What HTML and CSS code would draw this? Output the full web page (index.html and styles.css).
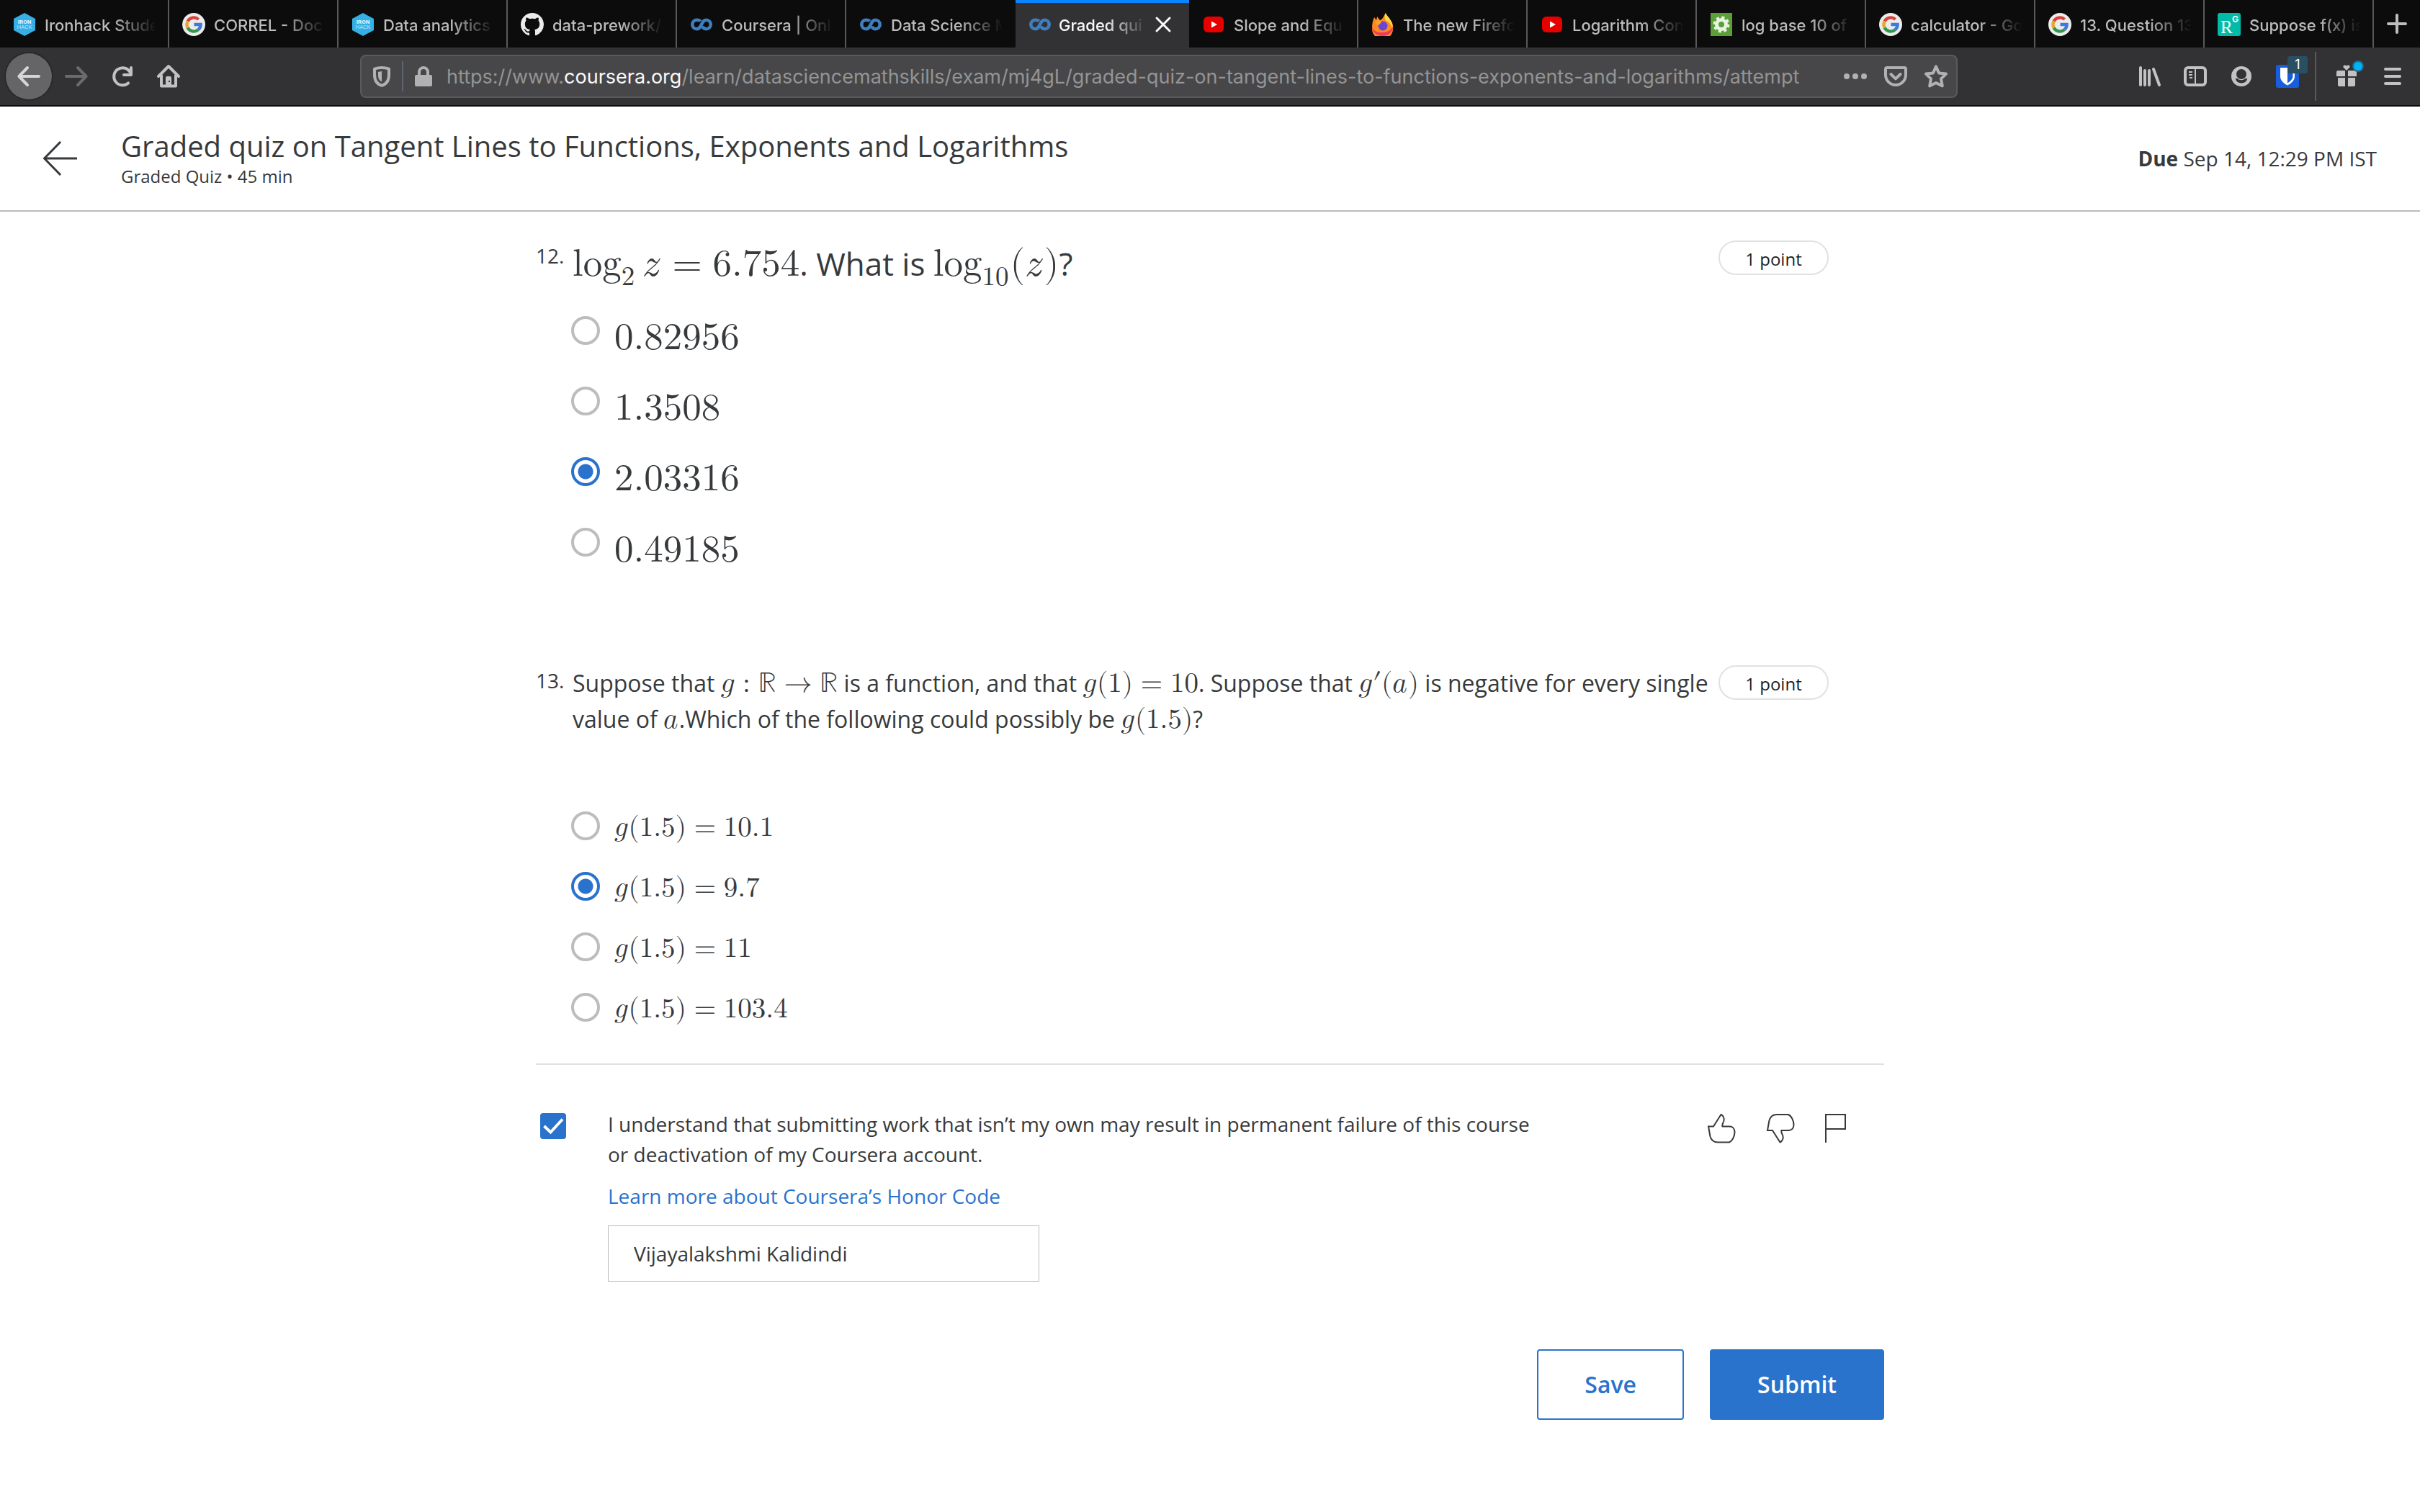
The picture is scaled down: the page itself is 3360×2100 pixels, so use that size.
FILE: index.html
```html
<!DOCTYPE html>
<html lang="en">
<head>
<meta charset="utf-8">
<title>Graded quiz on Tangent Lines to Functions, Exponents and Logarithms</title>
<link rel="stylesheet" href="styles.css">
</head>
<body>
<svg class="defs" aria-hidden="true">
  <symbol id="ironhack" viewBox="0 0 32 32"><path fill="#35b0e6" d="M16 0l15 8v16l-15 8-15-8V8z"/><text class="hack-top" x="16" y="15" text-anchor="middle">IRON</text><text class="hack-bottom" x="16" y="22" text-anchor="middle">HACK</text></symbol>
  <symbol id="google" viewBox="0 0 32 32"><circle cx="16" cy="16" r="16" fill="#ececec"/><g fill="none" stroke-width="4.4"><path stroke="#d9443a" d="M7.6 11.5A9.6 9.6 0 0 1 22.6 9"/><path stroke="#e2ab2c" d="M7.6 20.500A9.600 9.600 0 0 1 7.600 11.500"/><path stroke="#34964e" d="M22.400 23.200A9.600 9.600 0 0 1 7.600 20.500"/><path stroke="#3f79db" d="M16.500 16H25.600A9.600 9.600 0 0 1 22.400 23.200"/></g></symbol>
  <symbol id="github" viewBox="0 0 16 16"><path fill="#ececec" d="M8 0C3.580 0 0 3.580 0 8c0 3.540 2.290 6.530 5.470 7.590.4.070.55-.17.55-.38 0-.19-.01-.82-.01-1.490-2.010.37-2.530-.49-2.690-.94-.09-.23-.48-.94-.82-1.130-.28-.15-.68-.52-.01-.53.63-.01 1.080.58 1.230.82.72 1.210 1.870.87 2.330.66.070-.52.28-.87.51-1.070-1.780-.2-3.640-.89-3.640-3.950 0-.87.31-1.590.82-2.150-.08-.2-.36-1.020.08-2.120 0 0 .67-.21 2.200.82.64-.18 1.320-.27 2-.27s1.360.09 2 .27c1.530-1.040 2.200-.82 2.200-.82.44 1.100.16 1.920.08 2.120.51.56.82 1.270.82 2.150 0 3.070-1.870 3.750-3.650 3.950.29.25.54.73.54 1.480 0 1.070-.01 1.930-.01 2.200 0 .21.15.46.55.38A8.010 8.010 0 0 0 16 8c0-4.420-3.580-8-8-8z"/></symbol>
  <symbol id="coursera" viewBox="0 0 32 32"><path fill="none" stroke="#3f7ebe" stroke-width="4.600" d="M14.500 11.500C13 9.500 11 9.800 9.500 9.800A6.200 6.200 0 0 0 9.500 22.200C17 22.200 15 9.800 22.500 9.800A6.200 6.200 0 0 1 22.500 22.200C20 22.200 18 20.500 17.500 18.500"/></symbol>
  <symbol id="youtube" viewBox="0 0 32 32"><rect x="2" y="5" width="28" height="22" rx="6" fill="#e60000"/><path fill="#fff" d="M13 11.500l8 4.500-8 4.500z"/></symbol>
  <symbol id="firefox" viewBox="0 0 32 32"><path fill="#ff8a1f" d="M4 6l3 4 1-5 4 5c4-1 5-6 8-10 1 4 4 5 6 9 3 4 5 8 4 13a14.500 14.500 0 0 1-29 0C1 15 2 10 4 6z"/><path fill="#f03a5c" d="M1 19c2 6 8 9 14 8 7 0 12-3 15-8 0 8-7 13-14.500 13S1 27 1 19z"/><path fill="#ffd84a" d="M20 0c1 4 4 5 6 9 3 4 4 8 3 12-1-4-4-8-8-10-3-2-3-6-1-11z"/><circle cx="16" cy="18" r="6.500" fill="#6a45d8"/><path fill="#ffa22a" d="M6 11c4-1 6 0 8 2l-4 4c-3 0-4-3-4-6z"/></symbol>
  <symbol id="symbolab" viewBox="0 0 32 32"><rect x="1" width="30" height="32" fill="#5c9f38"/><circle cx="16" cy="16" r="9.500" fill="none" stroke="#e9f3e2" stroke-width="4" stroke-dasharray="4 3.460"/><circle cx="16" cy="16" r="6.500" fill="none" stroke="#e9f3e2" stroke-width="5"/></symbol>
  <symbol id="researchgate" viewBox="0 0 32 32"><rect width="32" height="32" rx="3" fill="#00bba8"/><text class="rg-r" x="4" y="28">R</text><text class="rg-g" x="20" y="13">G</text></symbol>
</svg>

<header class="browser">
  <nav class="tabs" aria-label="Open tabs">
    <a class="tab" href="#"><svg><use href="#ironhack"/></svg><span>Ironhack Stude</span></a>
    <a class="tab" href="#"><svg><use href="#google"/></svg><span>CORREL - Doc</span></a>
    <a class="tab" href="#"><svg><use href="#ironhack"/></svg><span>Data analytics</span></a>
    <a class="tab" href="#"><svg><use href="#github"/></svg><span>data-prework/</span></a>
    <a class="tab" href="#"><svg><use href="#coursera"/></svg><span>Coursera | Onl</span></a>
    <a class="tab" href="#"><svg><use href="#coursera"/></svg><span>Data Science M</span></a>
    <div class="tab active"><svg><use href="#coursera"/></svg><span>Graded qui</span><button class="close" aria-label="Close tab"><svg viewBox="0 0 24 24"><path d="M3 3l18 18M21 3L3 21"/></svg></button></div>
    <a class="tab" href="#"><svg><use href="#youtube"/></svg><span>Slope and Equ</span></a>
    <a class="tab" href="#"><svg><use href="#firefox"/></svg><span>The new Firefo</span></a>
    <a class="tab" href="#"><svg><use href="#youtube"/></svg><span>Logarithm Con</span></a>
    <a class="tab" href="#"><svg><use href="#symbolab"/></svg><span>log base 10 of</span></a>
    <a class="tab" href="#"><svg><use href="#google"/></svg><span>calculator - Go</span></a>
    <a class="tab" href="#"><svg><use href="#google"/></svg><span>13. Question 13</span></a>
    <a class="tab" href="#"><svg><use href="#researchgate"/></svg><span>Suppose f(x) is</span></a>
    <button class="new-tab" aria-label="New tab"><svg viewBox="0 0 32 32"><path d="M16 4v24M4 16h24"/></svg></button>
  </nav>
  <div class="toolbar">
    <div class="tools">
      <button class="tool back" aria-label="Back"><svg viewBox="0 0 16 16"><path class="line" d="M15 8H1.500M7 2L1.200 8 7 14"/></svg></button>
      <button class="tool dim" aria-label="Forward"><svg viewBox="0 0 16 16"><path class="line" d="M1 8h13.500M9 2l5.800 6L9 14"/></svg></button>
      <button class="tool" aria-label="Reload"><svg viewBox="0 0 16 16"><path class="line" d="M12 12.700A6 6 0 1 1 13.200 5"/><path fill="currentColor" d="M14 1a1 1 0 0 1 1 1v5a1 1 0 0 1-1 1H9a1 1 0 0 1 0-2h4V2a1 1 0 0 1 1-1z"/></svg></button>
      <button class="tool" aria-label="Home"><svg viewBox="0 0 16 16"><path class="line" d="M1 8l7-7 7 7M3 7.500v7.300h10V7.500"/><path fill="currentColor" fill-rule="evenodd" d="M7 8h2a1 1 0 0 1 1 1v6H6V9a1 1 0 0 1 1-1zm1 3v1h1v-1z"/></svg></button>
    </div>
    <div class="urlbar">
      <button class="field-icon" aria-label="Tracking protection"><svg viewBox="0 0 16 16"><path class="line" d="M8 2c2 0 3.500.3 5 .8V7c0 4-2 6.500-5 7.400C5 13.500 3 11 3 7V2.800C4.500 2.300 6 2 8 2z"/><path fill="currentColor" d="M8 4.500v7.300C6.200 10.800 5.500 9.300 5.500 7V5z"/></svg></button>
      <span class="split"></span>
      <button class="field-icon" aria-label="Site information"><svg viewBox="0 0 16 16"><path class="line" d="M5 8V5a3 3 0 0 1 6 0v3"/><rect x="2" y="7" width="12" height="8" rx="1" fill="currentColor"/></svg></button>
      <div class="url" role="textbox" aria-label="Address">https://www.<b>coursera.org</b>/learn/datasciencemathskills/exam/mj4gL/graded-quiz-on-tangent-lines-to-functions-exponents-and-logarithms/attempt</div>
      <button class="field-icon" aria-label="Page actions"><svg viewBox="0 0 16 16" fill="currentColor"><circle cx="2" cy="8" r="2"/><circle cx="8" cy="8" r="2"/><circle cx="14" cy="8" r="2"/></svg></button>
      <button class="field-icon" aria-label="Save to Pocket"><svg viewBox="0 0 16 16"><path class="line" d="M2 2h12a1 1 0 0 1 1 1v4A7 7 0 0 1 1 7V3a1 1 0 0 1 1-1zM4.700 6.500L8 9.700l3.300-3.200"/></svg></button>
      <button class="field-icon" aria-label="Bookmark"><svg viewBox="0 0 16 16"><path class="line" d="M8 1.200l2 4.500 5 .6-3.500 3.400.9 5L8 12.500l-4.400 2.200.9-5L1 6.300l5-.6z"/></svg></button>
    </div>
    <div class="tools">
      <button class="tool" aria-label="Library"><svg viewBox="0 0 16 16"><path class="line" d="M2 2v12M5 4v10M8 4v10M11 3l4 11"/></svg></button>
      <button class="tool" aria-label="Sidebar"><svg viewBox="0 0 16 16"><rect class="line" x="1" y="2" width="14" height="12" rx="2"/><path d="M8 2v12M3.500 5h2.500M3.500 7h2.500M4 9h2" stroke="currentColor" fill="none"/></svg></button>
      <button class="tool" aria-label="Account"><svg viewBox="0 0 16 16"><path fill="currentColor" fill-rule="evenodd" d="M8 1a7 7 0 1 0 0 14A7 7 0 0 0 8 1zm0 2a3.500 3.500 0 1 1 0 7 3.500 3.500 0 0 1 0-7zM3.800 9.500h1.400a4 4 0 0 0 5.600 0h1.400A4.500 4.500 0 0 1 8 12.800 4.500 4.500 0 0 1 3.800 9.500z"/></svg></button>
      <button class="tool" aria-label="Bitwarden"><svg viewBox="0 0 16 16"><rect width="16" height="16" rx="1.500" fill="#175ddc"/><path fill="#fff" fill-rule="evenodd" d="M3 2h10v6c0 3-2.500 5-5 6.300C5.500 13 3 11 3 8zm5 1.500v9.200c2-1.200 3.700-2.700 3.700-4.700V3.500z"/></svg><span class="badge">1</span></button>
      <span class="divider"></span>
      <button class="tool" aria-label="What's new"><svg viewBox="0 0 16 16" fill="currentColor"><path d="M1 5a1 1 0 0 1 1-1h5v4H1zM9 4h5a1 1 0 0 1 1 1v3H9zM2 9h5v6H3a1 1 0 0 1-1-1zM9 9h5v5a1 1 0 0 1-1 1H9zM8 4L5.700 1.600C5.500.5 6.800-.4 8 .8c1.200-1.200 2.500-.3 2.300.8z"/></svg><span class="dot"></span></button>
      <button class="tool" aria-label="Menu"><svg viewBox="0 0 16 16"><path class="line" d="M3 3h10M3 8h10M3 13h10"/></svg></button>
    </div>
  </div>
</header>

<header class="quiz-header">
  <a class="leave" href="#" aria-label="Back to course"><svg viewBox="0 0 48 48"><path d="M47 24H1.500M24 1L1.500 24 24 47"/></svg></a>
  <div class="heading">
    <h1>Graded quiz on Tangent Lines to Functions, Exponents and Logarithms</h1>
    <p>Graded Quiz • 45 min</p>
  </div>
  <p class="due"><b>Due</b> Sep 14, 12:29 PM IST</p>
</header>

<main>
  <section class="question large">
    <div class="question-head">
      <span class="number">12.</span>
      <p class="prompt"><span class="fn">log<sub>2</sub></span><math><mrow><mspace width="0.167em"/><mi>z</mi><mo>=</mo><mn>6.754</mn></mrow></math>. What is <span class="fn">log<sub>10</sub></span><math><mrow><mo stretchy="false">(</mo><mi>z</mi><mo stretchy="false">)</mo></mrow></math>?</p>
      <span class="points">1 point</span>
    </div>
    <div class="options">
      <label><input type="radio" name="q12"><math><mn>0.82956</mn></math></label>
      <label><input type="radio" name="q12"><math><mn>1.3508</mn></math></label>
      <label><input type="radio" name="q12" checked><math><mn>2.03316</mn></math></label>
      <label><input type="radio" name="q12"><math><mn>0.49185</mn></math></label>
    </div>
  </section>

  <section class="question">
    <div class="question-head">
      <span class="number">13.</span>
      <p class="prompt">Suppose that <math><mrow><mi>g</mi><mo lspace="0.278em" rspace="0.278em">:</mo><mi class="set">ℝ</mi><mo stretchy="false">→</mo><mi class="set">ℝ</mi></mrow></math> is a function, and that <math><mrow><mi>g</mi><mo stretchy="false">(</mo><mn>1</mn><mo stretchy="false">)</mo><mo>=</mo><mn>10</mn></mrow></math>. Suppose that <math><mrow><mi>g</mi><mo lspace="0" rspace="0">′</mo><mo stretchy="false">(</mo><mi>a</mi><mo stretchy="false">)</mo></mrow></math> is negative for every single value of <math><mi>a</mi></math>.Which of the following could possibly be <math><mrow><mi>g</mi><mo stretchy="false">(</mo><mn>1.5</mn><mo stretchy="false">)</mo></mrow></math>?</p>
      <span class="points">1 point</span>
    </div>
    <div class="options">
      <label><input type="radio" name="q13"><math><mrow><mi>g</mi><mo stretchy="false">(</mo><mn>1.5</mn><mo stretchy="false">)</mo><mo>=</mo><mn>10.1</mn></mrow></math></label>
      <label><input type="radio" name="q13" checked><math><mrow><mi>g</mi><mo stretchy="false">(</mo><mn>1.5</mn><mo stretchy="false">)</mo><mo>=</mo><mn>9.7</mn></mrow></math></label>
      <label><input type="radio" name="q13"><math><mrow><mi>g</mi><mo stretchy="false">(</mo><mn>1.5</mn><mo stretchy="false">)</mo><mo>=</mo><mn>11</mn></mrow></math></label>
      <label><input type="radio" name="q13"><math><mrow><mi>g</mi><mo stretchy="false">(</mo><mn>1.5</mn><mo stretchy="false">)</mo><mo>=</mo><mn>103.4</mn></mrow></math></label>
    </div>
  </section>

  <section class="honor">
    <input type="checkbox" id="agree" checked>
    <div class="honor-body">
      <label for="agree">I understand that submitting work that isn’t my own may result in permanent failure of this course or deactivation of my Coursera account.</label>
      <a href="#">Learn more about Coursera’s Honor Code</a>
      <input type="text" aria-label="Your legal name" value="Vijayalakshmi Kalidindi">
    </div>
    <div class="feedback">
      <button aria-label="Like"><svg viewBox="0 0 48 48"><path d="M6 21.500h7L23.500 5c3.500 1.500 5 6 3.700 9.500-1 2.500-2.700 5-1.700 7h10c4 0 7 3 7 8 0 5-3 12-7.500 14H19c-6 0-9-3-10.500-8z"/></svg></button>
      <button aria-label="Dislike"><svg viewBox="0 0 48 48"><path transform="matrix(1 0 0 -1 2 48.500)" d="M6 21.500h7L23.500 5c3.500 1.500 5 6 3.700 9.500-1 2.500-2.700 5-1.700 7h10c4 0 7 3 7 8 0 5-3 12-7.500 14H19c-6 0-9-3-10.500-8z"/></svg></button>
      <button aria-label="Report"><svg viewBox="0 0 48 48"><path d="M9 44V5h27v20H9"/></svg></button>
    </div>
  </section>

  <div class="actions">
    <button class="save">Save</button>
    <button class="submit">Submit</button>
  </div>
</main>
</body>
</html>
```
FILE: styles.css
```css
* { box-sizing: border-box; }

body {
  margin: 0;
  background: #fff;
  color: #373a3c;
  font: 28px/42px "Open Sans", "Noto Sans", sans-serif;
}

h1, p { margin: 0; font-weight: 400; }
a { color: #2a73cc; text-decoration: none; }
button { padding: 0; border: 0; background: none; color: inherit; font: inherit; }
svg { display: block; }
.defs { display: none; }

/* Browser window */
.browser {
  background: #323234;
  border-bottom: 2px solid #0c0c0d;
  color: #c2c2c3;
  font-family: Inter, Roboto, sans-serif;
}

.tabs { display: flex; height: 66px; background: #0c0c0c; }

.tab {
  display: flex;
  flex: 1;
  align-items: center;
  gap: 12px;
  min-width: 0;
  padding: 4px 16px 2px 18px;
  border-right: 2px solid #59595b;
  color: #bdbdbd;
  font-size: 22px;
  font-weight: 500;
  line-height: 32px;
}
.tab > svg { flex: none; width: 32px; height: 32px; }
.tab > span {
  flex: 1;
  padding-top: 2px;
  overflow: hidden;
  white-space: nowrap;
  -webkit-mask-image: linear-gradient(to left, transparent, #000 60px);
  mask-image: linear-gradient(to left, transparent, #000 60px);
}
.tab:has(+ .active) { border-right-color: #0c0c0c; }
.tab.active {
  gap: 10px;
  padding: 0 24px 2px 18px;
  border-top: 4px solid #0a84ff;
  border-right: 0;
  background: #323234;
  color: #f9f9fa;
}
.close svg { width: 24px; height: 24px; fill: none; stroke: #f9f9fa; stroke-width: 3; stroke-linecap: round; }

.new-tab { display: grid; place-items: center; width: 64px; }
.new-tab svg { width: 32px; height: 32px; stroke: #bdbdbd; stroke-width: 4; stroke-linecap: round; }

.hack-top, .hack-bottom { fill: #e8f6fc; font: 700 8px Roboto, sans-serif; }
.hack-bottom { font-weight: 300; }
.rg-r, .rg-g { fill: #fff; font: 25px "Liberation Serif", serif; }
.rg-g { font: 700 12px Inter, sans-serif; }

.toolbar { display: flex; align-items: center; gap: 234px; height: 80px; padding: 0 6px 0 8px; }
.tools { display: flex; align-items: center; }
.tool { position: relative; display: grid; place-items: center; width: 64px; height: 64px; }
.tool svg, .field-icon svg { width: 32px; height: 32px; overflow: visible; }
.line { fill: none; stroke: currentColor; stroke-width: 2; stroke-linecap: round; stroke-linejoin: round; }
.back { margin-right: 2px; border-radius: 50%; background: #656567; box-shadow: 0 0 0 2px #29292b; color: #d6d6d6; }
.dim { color: #6b6b6d; }
.divider { width: 2px; height: 68px; margin: 0 10px 0 6px; background: #59595b; }

.badge {
  position: absolute;
  top: 4px;
  right: 4px;
  width: 28px;
  height: 24px;
  border-radius: 3px;
  background: #2a4f63;
  color: #fff;
  font-size: 18px;
  line-height: 24px;
}
.dot {
  position: absolute;
  top: 12px;
  right: 10px;
  width: 12px;
  height: 12px;
  border-radius: 50%;
  background: #00b3f4;
  box-shadow: 0 0 0 2px #1c6a8a;
}

.urlbar {
  display: flex;
  flex: 1;
  align-items: center;
  min-width: 0;
  height: 60px;
  border: 2px solid #5a5a5c;
  border-radius: 8px;
  background: #474749;
  color: #b1b1b3;
}
.field-icon { display: grid; flex: none; place-items: center; width: 56px; height: 56px; }
.split { width: 2px; height: 42px; background: #5f6470; }
.url {
  flex: 1;
  min-width: 0;
  padding: 2px 0 0 4px;
  overflow: hidden;
  color: #949494;
  font-size: 27px;
  line-height: 40px;
  white-space: nowrap;
}
.url b { color: #f9f9fa; font-weight: 400; }

/* Quiz header */
.quiz-header {
  display: flex;
  align-items: center;
  gap: 60px;
  padding: 31px 60px;
  border-bottom: 2px solid #bbb;
}
.leave svg { width: 48px; height: 48px; fill: none; stroke: #373a3c; stroke-width: 3; }
.heading { flex: 1; }
.heading h1 { font-size: 40px; line-height: 48px; }
.heading p { margin-top: 2px; font-size: 24px; line-height: 32px; }

/* Questions */
main { max-width: 1872px; margin: 0 auto; padding-bottom: 100px; }

.question { padding-bottom: 24px; font-size: 32px; line-height: 50px; }
.question.large { padding: 40px 0 98px; font-size: 44px; line-height: 64px; }
.question-head { display: flex; align-items: flex-start; padding-right: 77px; }
.number { flex: none; width: 51px; font-size: 28px; line-height: 42px; }
.prompt { flex: 1; }

.points {
  flex: none;
  width: 153px;
  padding-top: 4px;
  border: 2px solid #e1e1e1;
  border-radius: 24px;
  color: #1f1f1f;
  font-size: 24px;
  line-height: 40px;
  text-align: center;
}

/* Formulas */
math, .fn {
  font-family: "Latin Modern Math", math, "Liberation Serif", serif;
  font-size: 39px;
  line-height: 1;
}
.large math, .large .fn { font-size: 53px; }
mi { padding-right: 1px; }
.large mi { padding-right: 2px; }
mi.set { padding-right: 0; }
.fn sub { position: relative; top: 13px; margin-right: 2px; font-size: 37px; line-height: 0; vertical-align: baseline; }

.options { display: grid; padding: 93px 0 0 49px; }
.options label { display: flex; align-items: flex-start; gap: 20px; height: 84px; padding-top: 10px; }
.options math { margin-top: 4px; }
.large .options { padding-top: 36px; }
.large .options label { height: 98px; padding-top: 5px; }
.large .options math { margin-top: 10px; }

input[type="radio"] {
  flex: none;
  width: 40px;
  height: 40px;
  margin: 0;
  appearance: none;
  border: 4px solid #bdbdbd;
  border-radius: 50%;
}
input[type="radio"]:checked {
  border-color: #2a73cc;
  background: radial-gradient(circle, #2a73cc 10px, #fff 11px);
}

/* Honor code */
.honor {
  display: flex;
  align-items: flex-start;
  padding: 61px 42px 0 6px;
  border-top: 2px solid #e1e1e1;
}
input[type="checkbox"] {
  flex: none;
  width: 36px;
  height: 36px;
  margin: 6px 58px 0 0;
  appearance: none;
  border-radius: 4px;
  background: #2a73cc url("data:image/svg+xml,%3Csvg xmlns='http://www.w3.org/2000/svg' viewBox='0 0 36 36'%3E%3Cpath d='M5.500 18l9 8.500L31 8.500' fill='none' stroke='white' stroke-width='4'/%3E%3C/svg%3E");
}
.honor-body { display: flex; flex: 1; flex-direction: column; align-items: flex-start; max-width: 1300px; }
.honor-body a { margin: 16px 0 20px; }
input[type="text"] {
  width: 599px;
  height: 78px;
  padding: 0 35px;
  border: 1px solid #bbb;
  color: inherit;
  font: inherit;
}
.feedback { display: flex; gap: 32px; margin: 3px 0 0 auto; }
.feedback svg { width: 48px; height: 48px; fill: none; stroke: #373a3c; stroke-width: 2; }

.actions { display: flex; justify-content: flex-end; gap: 36px; margin-top: 94px; }
.actions button {
  height: 98px;
  padding: 0 64px;
  border: 2px solid #2a73cc;
  border-radius: 4px;
  color: #2a73cc;
  font-size: 32px;
  font-weight: 600;
}
.actions .submit { background: #2a73cc; color: #fff; }
```
